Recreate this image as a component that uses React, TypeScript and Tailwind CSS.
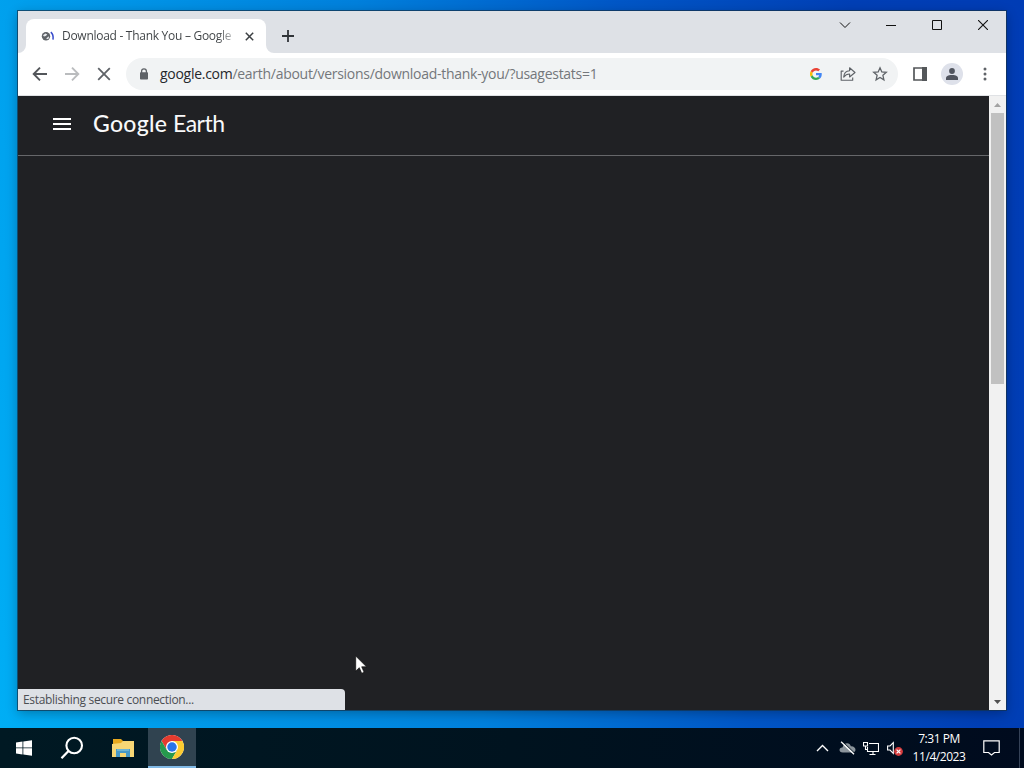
import React from "react";

function Chrome() {
  return (
    <svg className="h-6 w-6" viewBox="0 0 48 48">
      <circle cx="24" cy="24" r="24" fill="#fff" />
      <path d="M24 12H44.8A24 24 0 0 0 3.2 12L13.6 30Z" fill="#e33b2e" />
      <path d="M13.6 30L3.2 12A24 24 0 0 0 24 48L34.4 30Z" fill="#26994d" />
      <path d="M34.4 30L24 48A24 24 0 0 0 44.8 12H24Z" fill="#fccb31" />
      <circle cx="24" cy="24" r="12" fill="#fff" />
      <circle cx="24" cy="24" r="9.5" fill="#2874e8" />
    </svg>
  );
}

function TabStrip() {
  return (
    <div className="flex h-[42px] shrink-0 bg-[#dee1e6]">
      <div className="flex h-full w-2 flex-col justify-end bg-[#dee1e6]">
        <svg className="h-2 w-2" viewBox="0 0 8 8"><path d="M8 0V8H0A8 8 0 0 0 8 0Z" fill="#fff" /></svg>
      </div>
      <div className="mt-2 flex h-[34px] w-[240px] items-center rounded-t-lg bg-white pl-[15px]">
        <svg className="h-4 w-[14px]" viewBox="0 0 14 16">
          <circle cx="5" cy="8.2" r="4.2" fill="#5f6368" />
          <path d="M2 7.2L4.4 5.6L6.3 6.5L4.8 8L3 8.6ZM5.3 10.3L8 8.2L7.8 10.5L6 11.2Z" fill="#e8eaed" />
          <path d="M9.8 4.2Q12.7 6.5 12 11.6" fill="none" stroke="#3549cb" strokeWidth="1.5" />
        </svg>
        <div className="ml-[7px] w-[171px] whitespace-nowrap bg-gradient-to-r from-[#3c4043] from-91% to-[#3c4043]/30 bg-clip-text text-[12px] leading-4 tracking-[-0.28px] text-transparent">Download - Thank You – Google</div>
        <svg className="ml-[12px] h-[9px] w-[9px]" viewBox="0 0 9 9"><path d="M.8.8L8.2 8.2M8.2.8L.8 8.2" stroke="#3c4043" strokeWidth="1.5" /></svg>
      </div>
      <div className="flex h-full w-2 flex-col justify-end">
        <svg className="h-2 w-2" viewBox="0 0 8 8"><path d="M0 0V8H8A8 8 0 0 1 0 0Z" fill="#fff" /></svg>
      </div>
      <svg className="ml-[8px] mt-[19px] h-3 w-3" viewBox="0 0 12 12"><path d="M6 0V12M0 6H12" stroke="#303438" strokeWidth="1.8" /></svg>
      <div className="ml-auto flex h-7 text-[#111]">
        <div className="flex w-[46px] items-center justify-center"><svg className="h-3 w-3" viewBox="0 0 12 12"><path d="M1 3.5L6 8.5L11 3.5" fill="none" stroke="currentColor" /></svg></div>
        <div className="flex w-[46px] items-center justify-center"><svg className="h-[11px] w-[10px]" viewBox="0 0 10 11"><path d="M0 5.5H10" stroke="currentColor" /></svg></div>
        <div className="flex w-[46px] items-center justify-center"><svg className="h-[10px] w-[10px]" viewBox="0 0 10 10"><path d="M.5.5H9.5V9.5H.5Z" fill="none" stroke="currentColor" /></svg></div>
        <div className="flex w-[46px] items-center justify-center"><svg className="h-[10px] w-[10px]" viewBox="0 0 10 10"><path d="M0 0L10 10M10 0L0 10" stroke="currentColor" strokeWidth="1.1" /></svg></div>
      </div>
    </div>
  );
}

function Toolbar() {
  return (
    <div className="flex h-[43px] shrink-0 items-center border-b border-[#e0e2e5] bg-white pl-[14px]">
      <svg className="h-4 w-4 text-[#53565a]" viewBox="0 0 16 16"><path d="M15 8H2M8 1.7L1.7 8L8 14.3" fill="none" stroke="currentColor" strokeWidth="1.9" /></svg>
      <svg className="ml-4 h-4 w-4 text-[#babcbe]" viewBox="0 0 16 16"><path d="M1 8H14M8 1.7L14.3 8L8 14.3" fill="none" stroke="currentColor" strokeWidth="1.9" /></svg>
      <svg className="ml-4 h-4 w-4" viewBox="0 0 16 16"><path d="M2.2 2.2L13.8 13.8M13.8 2.2L2.2 13.8" stroke="#5f6368" strokeWidth="1.8" /></svg>
      <div className="ml-[14px] flex h-8 w-[772px] items-center rounded-full bg-[#f1f3f4] pl-[13px]">
        <svg className="h-3 w-[10px]" viewBox="0 0 10 12"><path d="M2.6 5V3.3A2.4 2.4 0 0 1 7.4 3.3V5" fill="none" stroke="#5f6368" strokeWidth="1.3" /><rect x="1" y="4.3" width="8" height="7.3" rx=".8" fill="#5f6368" /></svg>
        <div className="ml-[11px] w-[650px] whitespace-nowrap text-[14px] leading-5 tracking-[-0.28px] text-[#74777b]"><span className="text-[#25282c]">google.com</span>/earth/about/versions/download-thank-you/?usagestats=1</div>
        <svg className="h-3 w-3" viewBox="0 0 48 48">
          <path fill="#ea4335" d="M24 9.5c3.5 0 6.7 1.2 9.2 3.6l6.9-6.9C35.9 2.4 30.5 0 24 0 14.6 0 6.5 5.4 2.6 13.2l8 6.2C12.4 13.7 17.7 9.5 24 9.5z" />
          <path fill="#4285f4" d="M47 24.6c0-1.6-.2-3.1-.4-4.6H24v9h12.9c-.6 3-2.2 5.5-4.7 7.2l7.7 6C44.4 38 47 32 47 24.6z" />
          <path fill="#fbbc05" d="M10.5 28.6a14.5 14.5 0 0 1 0-9.2l-8-6.2a24 24 0 0 0 0 21.6z" />
          <path fill="#34a853" d="M24 48c6.5 0 11.9-2.1 15.9-5.8l-7.7-6C30 37.7 27.2 38.5 24 38.5c-6.3 0-11.6-4.2-13.5-9.9l-8 6.2C6.5 42.6 14.6 48 24 48z" />
        </svg>
        <svg className="ml-[18px] h-4 w-4" viewBox="0 0 16 16"><path d="M3.5 5.1H1.2V14.2H12.7V11.5M3.7 11.1Q4.2 5 9.6 4.8V1.8L15 6.5L9.6 11V8Q5.9 8 3.7 11.1Z" fill="none" stroke="#5f6368" strokeWidth="1.15" strokeLinejoin="round" /></svg>
        <svg className="ml-4 h-4 w-4" viewBox="0 0 16 16"><path d="M8 1.8L9.8 5.9L14.3 6.3L10.9 9.3L11.9 13.8L8 11.4L4.1 13.8L5.1 9.3L1.7 6.3L6.2 5.9Z" fill="none" stroke="#5f6368" strokeWidth="1.3" /></svg>
      </div>
      <svg className="ml-[15px] h-[14px] w-[14px]" viewBox="0 0 14 14"><path d="M1 1H13V13H1Z" fill="none" stroke="#54575a" strokeWidth="1.7" /><path d="M9 0H14V14H9Z" fill="#54575a" /></svg>
      <div className="ml-[14px] flex h-[22px] w-[22px] items-center justify-center rounded-full bg-[#dee1ea]"><svg className="h-3 w-3" viewBox="0 0 12 12"><circle cx="6" cy="3" r="2.9" fill="#51555f" /><path d="M0 12V10C0 7.5 4 7 6 7S12 7.5 12 10V12Z" fill="#51555f" /></svg></div>
      <svg className="ml-5 h-[14px] w-[4px]" viewBox="0 0 4 14"><g fill="#5f6368"><circle cx="2" cy="2" r="1.5" /><circle cx="2" cy="7" r="1.5" /><circle cx="2" cy="12" r="1.5" /></g></svg>
    </div>
  );
}

function Page() {
  return (
    <div className="relative flex h-[614px] bg-[#202124]">
      <div className="w-[971px]">
        <div className="flex h-[60px] items-center border-b border-[#66676a] pl-[35px] pb-[3px]">
          <svg className="h-3 w-[18px]" viewBox="0 0 18 12"><path d="M0 1H18M0 6H18M0 11H18" stroke="#fff" strokeWidth="2" /></svg>
          <div className="-mt-[2px] ml-[22px] flex items-baseline whitespace-nowrap font-['Lato',sans-serif] text-[23px] leading-7 text-[#f8f9fa]">
            <span className="w-[80px] font-medium tracking-[0.3px]">Google</span><span className="tracking-[-0.5px]">Earth</span>
          </div>
        </div>
      </div>
      <div className="flex w-[17px] flex-col items-center bg-[#f1f1f1]">
        <div className="flex h-[17px] items-center"><svg className="h-1 w-[7px]" viewBox="0 0 7 4"><path d="M0 4L3.5 0L7 4Z" fill="#a3a3a3" /></svg></div>
        <div className="h-[271px] w-[13px] bg-[#c1c1c1]" />
        <div className="mt-auto flex h-[17px] items-center"><svg className="h-1 w-[7px]" viewBox="0 0 7 4"><path d="M0 0L3.5 4L7 0Z" fill="#505050" /></svg></div>
      </div>
      <div className="absolute bottom-0 left-0 flex h-[21px] w-[327px] items-center whitespace-nowrap rounded-tr bg-[#dee1e6] pl-[5px] text-[12px] tracking-[-0.33px] text-[#4b4e53]">Establishing secure connection...</div>
      <svg className="absolute left-[337px] top-[559px] h-[20px] w-[13px]" viewBox="0 0 13 20"><path d="M.7 1V16.1L4.3 12.7L6.7 18.3L9.1 17.3L6.7 11.8H11.5Z" fill="#fff" stroke="#111" strokeWidth=".7" /></svg>
    </div>
  );
}

function Taskbar() {
  return (
    <div className="flex h-10 shrink-0 items-center bg-gradient-to-r from-[#001923] via-[#00131f] to-[#000b1e] text-white">
      <div className="flex h-full w-12 items-center justify-center"><svg className="h-4 w-4" viewBox="0 0 16 16"><path d="M0 2.4L6.5 1.5V7.5H0ZM7.3 1.4L16 .2V7.5H7.3ZM0 8.3H6.5V14.5L0 13.6ZM7.3 8.3H16V15.8L7.3 14.6Z" fill="#fff" /></svg></div>
      <div className="flex h-full w-12 items-center justify-center"><svg className="h-6 w-6" viewBox="0 0 24 24"><circle cx="14.2" cy="9.5" r="7.8" fill="none" stroke="white" strokeWidth="2.1" /><path d="M8.5 15L1.5 22.2" stroke="white" strokeWidth="2.3" /></svg></div>
      <div className="flex h-full w-[52px] items-center justify-center pl-px"><svg className="h-[19px] w-[22px]" viewBox="0 0 22 19"><path d="M1 0H9L11 2H21V5H1Z" fill="#e8a91f" /><path d="M0 5L9 4L11 2H22V18H0Z" fill="#f8d775" /><path d="M4 18V10H18V18H14V14H8V18Z" fill="#4899c8" /><path d="M5 10H17V12H5Z" fill="#6fb5d4" /></svg></div>
      <div className="flex h-full w-12 items-center justify-center border-b-2 border-[#80b9e5] bg-[#304350]"><Chrome /></div>
      <div className="ml-auto flex h-full items-center">
        <svg className="h-[8px] w-[13px]" viewBox="0 0 13 8"><path d="M1 7L6.5 1.5L12 7" fill="none" stroke="white" strokeWidth="1.4" /></svg>
        <svg className="ml-[10px] h-[14px] w-[17px]" viewBox="0 0 17 14"><path d="M3.8 11.5C-.8 11.5-.2 6.1 3.5 6.4C4.8 1 11 1.1 11.8 5.2C17.5 4.9 17.8 11.5 13.8 11.5Z" fill="#8b949b" /><path d="M3.3.3L16.2 12.7" stroke="#02101c" strokeWidth="1" /><path d="M2.1.8L15 13.2" stroke="white" strokeWidth="1.3" /></svg>
        <svg className="ml-[7px] h-[15px] w-[16px]" viewBox="0 0 16 15"><path d="M6 2.5H15.5V10.5H4.5V6M10 10.5V13.5M6.5 13.5H12.5M.5 1.5H4.5V5H.5ZM2.5 5V8.5H4.5" fill="none" stroke="white" strokeWidth="1.1" /></svg>
        <svg className="ml-[8px] h-[17px] w-[16px]" viewBox="0 0 16 17"><path d="M.6 6H3L6.3 2.7V13.3L3 10H.6Z" fill="none" stroke="white" strokeWidth="1.1" /><circle cx="11.5" cy="11.5" r="4.4" fill="#d33b3d" /><path d="M9.6 9.6L13.4 13.4M13.4 9.6L9.6 13.4" stroke="white" strokeWidth="1.2" /></svg>
        <div className="ml-[5px] flex h-full w-[62px] flex-col items-center pt-[2px] text-[12px] leading-[18px] tracking-[-0.45px]"><span>7:31 PM</span><span>11/4/2023</span></div>
        <svg className="ml-[13px] mr-[19px] h-[16px] w-[17px]" viewBox="0 0 17 16"><path d="M.8.8H16.2V12.5H11.5L8.5 15L5.5 12.5H.8Z" fill="none" stroke="white" strokeWidth="1.2" /></svg>
        <div className="mr-1 h-full w-px bg-[#354257]" />
      </div>
    </div>
  );
}

export default function App() {
  return (
    <div className="flex h-[768px] w-[1024px] flex-col overflow-hidden bg-[#003db3] font-['Open_Sans','Noto_Sans',sans-serif]">
      <div className="h-[728px] bg-[linear-gradient(80deg,#00aef5_0%,#009ceb_15%,#0080dc_42%,#0056c6_65%,#003fb5_85%,#003cb5_100%)] pl-[18px] pt-[11px]">
        <div className="flex h-[699px] w-[988px] flex-col shadow-[0_0_0_1px_rgba(20,50,75,0.7),0_3px_11px_rgba(0,0,0,0.3)]">
          <TabStrip />
          <Toolbar />
          <Page />
        </div>
      </div>
      <Taskbar />
    </div>
  );
}
